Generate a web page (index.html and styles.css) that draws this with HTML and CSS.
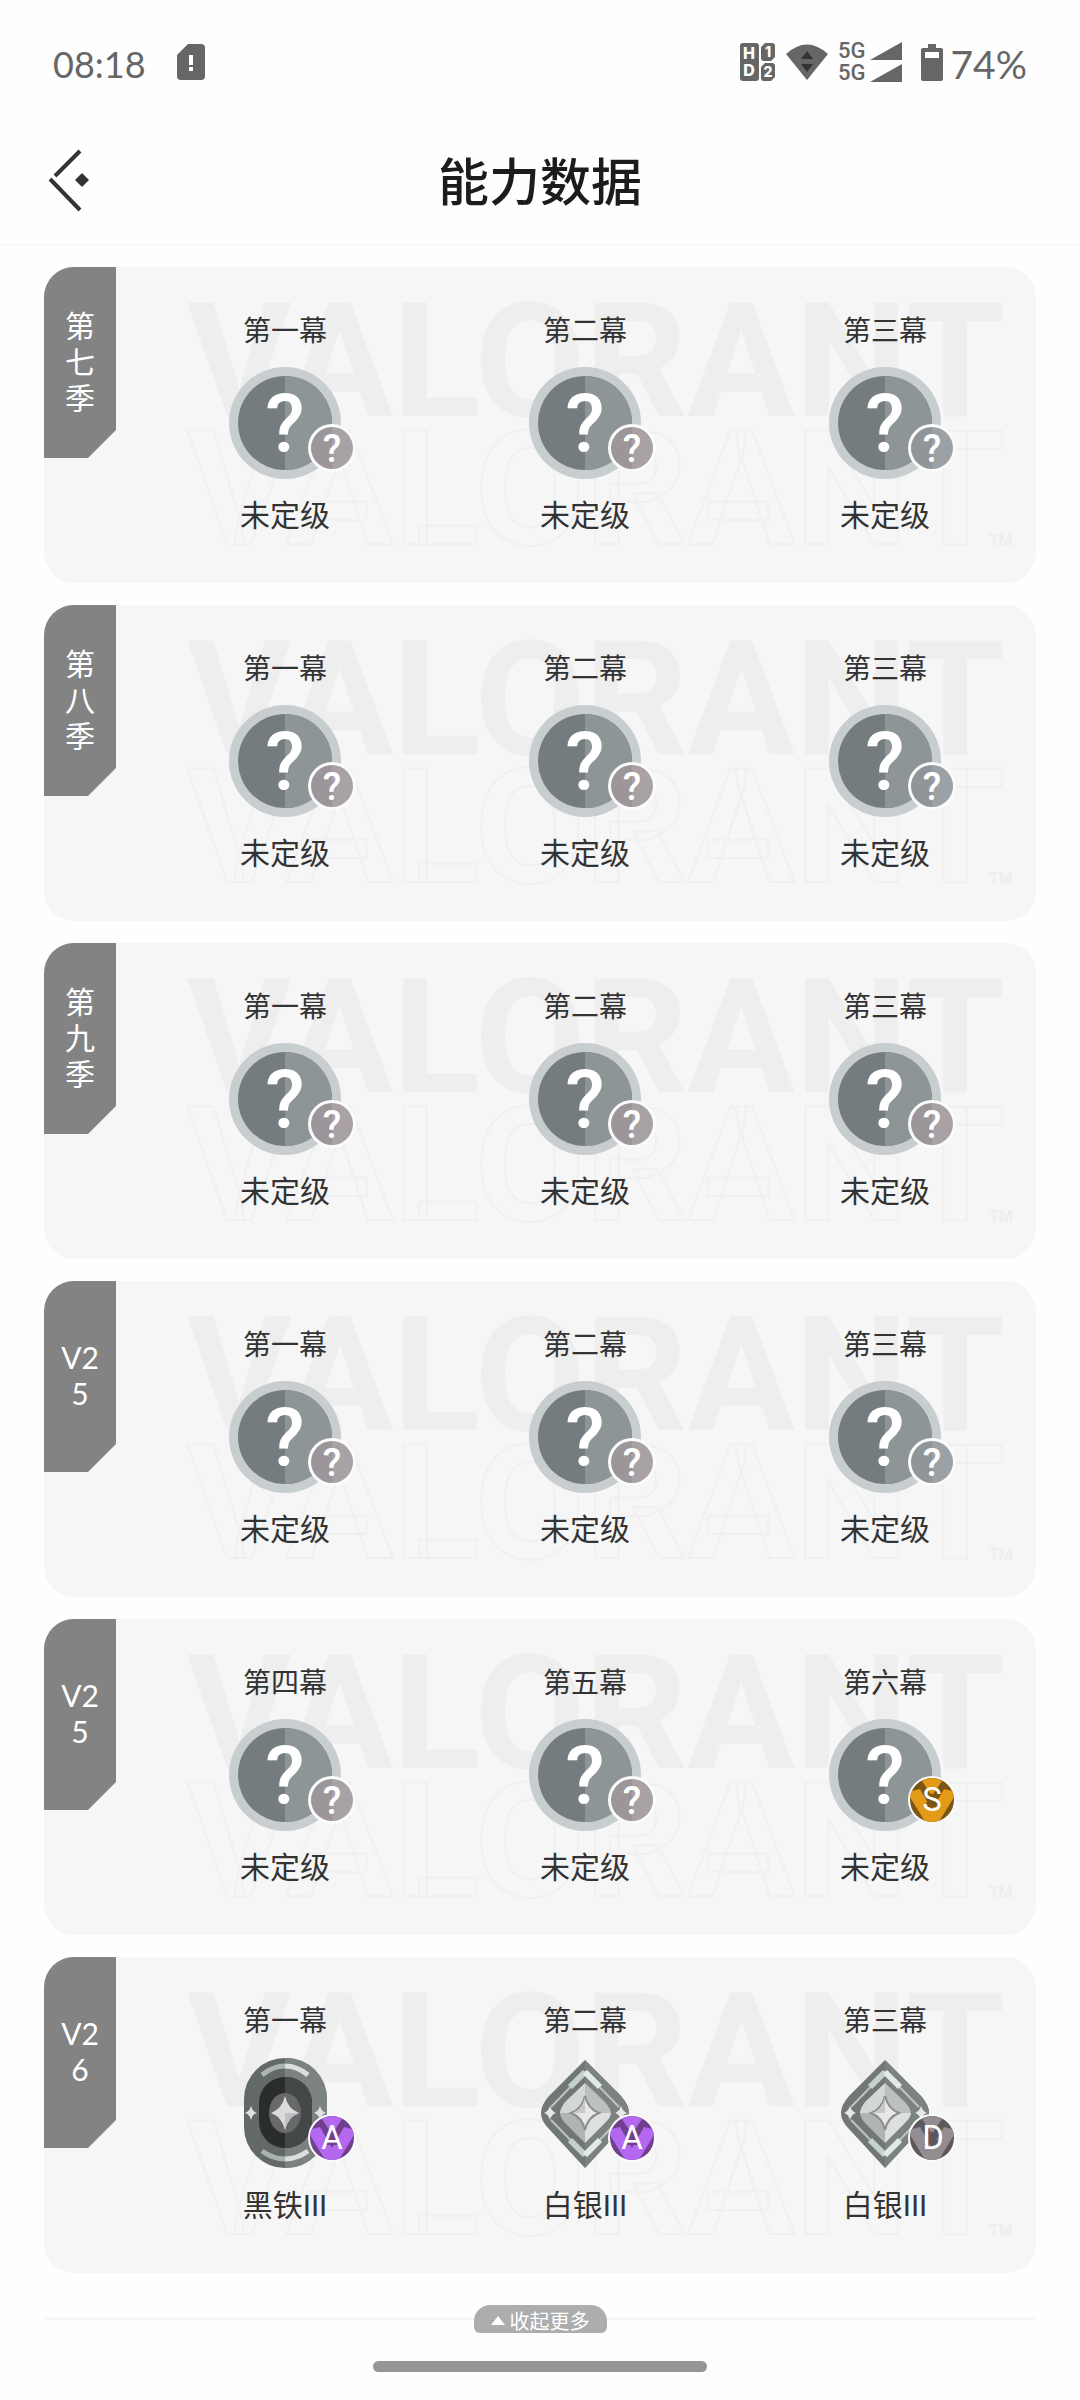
FILE: index.html
```html
<!DOCTYPE html>
<html lang="zh-CN">
<head>
  <meta charset="UTF-8">
  <meta name="viewport" content="width=device-width, initial-scale=1.0">
  <title>能力数据</title>
  <link rel="stylesheet" href="styles.css">
</head>

<body>

  <!-- 图标定义 -->
  <svg class="defs" width="0" height="0" aria-hidden="true">
    <defs>
      <path id="star" d="M0 -17 Q3 -4 14 0 Q3 4 0 17 Q-3 4 -14 0 Q-3 -4 0 -17Z"/>
      <symbol id="rank-none" viewBox="0 0 112 112">
        <circle cx="56" cy="56" r="56" fill="#c8cdd0"/>
        <circle cx="56" cy="56" r="47" fill="#757c7f"/>
        <path d="M56 9 A47 47 0 0 1 56 103Z" fill="#8e9597"/>
        <text class="mark" x="56" y="85" font-size="81">?</text>
      </symbol>
      <symbol id="rank-iron" viewBox="0 0 112 112">
        <rect x="15" y="1" width="83" height="110" rx="41" fill="#626967"/>
        <path d="M56 1 H57 A41 41 0 0 1 98 42 V70 A41 41 0 0 1 57 111 H56Z" fill="#7b8280"/>
        <rect x="30" y="20" width="53" height="71" rx="26" fill="#2b2d2d"/>
        <path d="M56 20 H57 A26 26 0 0 1 83 46 V65 A26 26 0 0 1 57 91 H56Z" fill="#454848"/>
        <path d="M33 18 Q44 9 56 9" fill="none" stroke="#a9b4b0" stroke-width="5"/>
        <path d="M56 9 Q68 9 79 18" fill="none" stroke="#d9dfdd" stroke-width="5"/>
        <path d="M33 94 Q44 102 56 102" fill="none" stroke="#a9b4b0" stroke-width="5"/>
        <path d="M56 102 Q68 102 79 94" fill="none" stroke="#d9dfdd" stroke-width="5"/>
        <ellipse cx="56" cy="56" rx="16" ry="20" fill="#68696b"/>
        <use href="#star" x="56" y="56" fill="#dcdadd"/>
        <path d="M56 56 H70 Q59 60 56 73Z" fill="#c2bfc4"/>
        <use href="#star" transform="translate(22 56) scale(.42)" fill="#e0e0e2"/>
        <use href="#star" transform="translate(91 56) scale(.42)" fill="#e0e0e2"/>
      </symbol>
      <symbol id="rank-silver" viewBox="0 0 112 112">
        <path d="M56 3 L92 39 Q100 48 100 56 Q100 64 92 72 L56 111 L20 72 Q12 64 12 56 Q12 48 20 39Z" fill="#707774"/>
        <path d="M56 3 L92 39 Q100 48 100 56 Q100 64 92 72 L56 111Z" fill="#7b827f"/>
        <path d="M22 50 L56 15 L90 50 M22 63 L56 98 L90 63" fill="none" stroke="#bcc5c2" stroke-width="2"/>
        <path d="M41 30 L56 15 M41 83 L56 98" fill="none" stroke="#c4d1cc" stroke-width="6"/>
        <path d="M56 15 L71 30 M56 98 L71 83" fill="none" stroke="#e1eae7" stroke-width="6"/>
        <path d="M56 26 L76 45 Q82 52 82 56 H56Z" fill="#bcc1bf"/>
        <path d="M56 26 L36 45 Q31 52 31 56 H56Z" fill="#d3d7d5"/>
        <path d="M31 56 Q31 60 36 66 L56 86 V56Z" fill="#b0b5b3"/>
        <path d="M82 56 Q82 60 76 66 L56 86 V56Z" fill="#dde0df"/>
        <use href="#star" x="56" y="56" fill="#e8e7e8" stroke="#8b8e8d" stroke-width="2"/>
        <path d="M56 40 V56 H43 Q53 53 56 40Z" fill="#c8c8c9"/>
        <use href="#star" transform="translate(21 56) scale(.42)" fill="#e6e8e7"/>
        <use href="#star" transform="translate(92 56) scale(.42)" fill="#e6e8e7"/>
      </symbol>
      <symbol id="badge-none" viewBox="0 0 48 48">
        <circle cx="24" cy="24" r="24" fill="#fbfbfb"/>
        <circle cx="24" cy="24" r="21" fill="currentColor"/>
        <path d="M24 3 A21 21 0 0 1 24 45Z" fill="#fff" fill-opacity=".12"/>
        <text class="mark" x="24" y="38" font-size="38">?</text>
      </symbol>
      <symbol id="badge-gem" viewBox="0 0 48 48">
        <circle cx="24" cy="24" r="24" fill="#fbfbfb"/>
        <circle cx="24" cy="24" r="22" fill="currentColor"/>
        <path d="M14 5 Q24 -1 34 5 L24 20Z M4 15 L12 13 L24 34 L36 13 L44 15 Q46 18 46 21 L32 44 Q24 48 16 44 L2 21 Q2 18 4 15Z" fill="var(--gem)"/>
        <path d="M24 17 L32 31 H16Z" fill="currentColor"/>
      </symbol>
    </defs>
  </svg>

  <div class="status-bar">
    <div class="status-group">
      <span class="time">08:18</span>
      <svg class="sim" width="28" height="36" viewBox="0 0 28 36">
        <path d="M11 0 H24 Q28 0 28 4 V32 Q28 36 24 36 H4 Q0 36 0 32 V11Z" fill="#666"/>
        <path d="M12 11 H16 V21 H12Z M12 23 H16 V27 H12Z" fill="#fff"/>
      </svg>
    </div>
    <div class="status-group">
      <svg width="35" height="38" viewBox="0 0 35 38" font-family="Inter, sans-serif" font-weight="800" font-size="16" fill="#fff" text-anchor="middle">
        <rect width="19" height="38" rx="3" fill="#666"/>
        <path d="M25 0 H32 Q35 0 35 3 V14 L31 18 H24 Q21 18 21 15 V4Z M25 20 H32 Q35 20 35 23 V34 L31 38 H24 Q21 38 21 35 V24Z" fill="#666"/>
        <text x="9" y="16">H</text>
        <text x="9" y="33">D</text>
        <text x="28" y="14" font-size="14">1</text>
        <text x="28" y="34" font-size="14">2</text>
      </svg>
      <svg class="wifi" width="42" height="36" viewBox="0 0 42 36">
        <path d="M0 10 Q21 -9 42 10 L21 36Z" fill="#666"/>
        <path d="M15 15 L21 7 L27 15Z M15 20 H27 L21 28Z" fill="#333"/>
      </svg>
      <div class="signals">
        <span>5G</span>
        <svg width="32" height="18" viewBox="0 0 32 18"><path d="M0 18 L32 0 V18Z" fill="#666"/></svg>
        <span>5G</span>
        <svg width="32" height="18" viewBox="0 0 32 18"><path d="M0 18 L32 0 V18Z" fill="#666"/></svg>
      </div>
      <svg class="battery" width="22" height="37" viewBox="0 0 22 37">
        <path d="M7 0 H15 V4 H20 Q22 4 22 6 V35 Q22 37 20 37 H2 Q0 37 0 35 V6 Q0 4 2 4 H7Z" fill="#666"/>
        <path d="M4 8 H18 V14 H4Z" fill="#fff"/>
      </svg>
      <span class="percent">74%</span>
    </div>
  </div>

  <header class="header">
    <button class="back" type="button" aria-label="返回">
      <svg width="42" height="64" viewBox="0 0 42 64">
        <path d="M32 3 L7 28 M2 31 L32 62" fill="none" stroke="#333" stroke-width="4"/>
        <path d="M34 25 L41 32 L34 39 L27 32Z" fill="#333"/>
      </svg>
    </button>
    <h1>能力数据</h1>
  </header>

  <main class="seasons">

    <section class="season">
      <div class="watermark" aria-hidden="true"><span>VALORANT</span><span class="outline">VALORANT</span><small>TM</small></div>
      <h2 class="tag">第七季</h2>
      <div class="acts">
        <div class="act"><h3>第一幕</h3><div class="rank"><svg><use href="#rank-none"/></svg><svg class="badge"><use href="#badge-none"/></svg></div><p>未定级</p></div>
        <div class="act"><h3>第二幕</h3><div class="rank"><svg><use href="#rank-none"/></svg><svg class="badge"><use href="#badge-none"/></svg></div><p>未定级</p></div>
        <div class="act"><h3>第三幕</h3><div class="rank"><svg><use href="#rank-none"/></svg><svg class="badge cool"><use href="#badge-none"/></svg></div><p>未定级</p></div>
      </div>
    </section>

    <section class="season">
      <div class="watermark" aria-hidden="true"><span>VALORANT</span><span class="outline">VALORANT</span><small>TM</small></div>
      <h2 class="tag">第八季</h2>
      <div class="acts">
        <div class="act"><h3>第一幕</h3><div class="rank"><svg><use href="#rank-none"/></svg><svg class="badge"><use href="#badge-none"/></svg></div><p>未定级</p></div>
        <div class="act"><h3>第二幕</h3><div class="rank"><svg><use href="#rank-none"/></svg><svg class="badge"><use href="#badge-none"/></svg></div><p>未定级</p></div>
        <div class="act"><h3>第三幕</h3><div class="rank"><svg><use href="#rank-none"/></svg><svg class="badge cool"><use href="#badge-none"/></svg></div><p>未定级</p></div>
      </div>
    </section>

    <section class="season">
      <div class="watermark" aria-hidden="true"><span>VALORANT</span><span class="outline">VALORANT</span><small>TM</small></div>
      <h2 class="tag">第九季</h2>
      <div class="acts">
        <div class="act"><h3>第一幕</h3><div class="rank"><svg><use href="#rank-none"/></svg><svg class="badge"><use href="#badge-none"/></svg></div><p>未定级</p></div>
        <div class="act"><h3>第二幕</h3><div class="rank"><svg><use href="#rank-none"/></svg><svg class="badge"><use href="#badge-none"/></svg></div><p>未定级</p></div>
        <div class="act"><h3>第三幕</h3><div class="rank"><svg><use href="#rank-none"/></svg><svg class="badge"><use href="#badge-none"/></svg></div><p>未定级</p></div>
      </div>
    </section>

    <section class="season">
      <div class="watermark" aria-hidden="true"><span>VALORANT</span><span class="outline">VALORANT</span><small>TM</small></div>
      <h2 class="tag">V25</h2>
      <div class="acts">
        <div class="act"><h3>第一幕</h3><div class="rank"><svg><use href="#rank-none"/></svg><svg class="badge"><use href="#badge-none"/></svg></div><p>未定级</p></div>
        <div class="act"><h3>第二幕</h3><div class="rank"><svg><use href="#rank-none"/></svg><svg class="badge"><use href="#badge-none"/></svg></div><p>未定级</p></div>
        <div class="act"><h3>第三幕</h3><div class="rank"><svg><use href="#rank-none"/></svg><svg class="badge cool"><use href="#badge-none"/></svg></div><p>未定级</p></div>
      </div>
    </section>

    <section class="season">
      <div class="watermark" aria-hidden="true"><span>VALORANT</span><span class="outline">VALORANT</span><small>TM</small></div>
      <h2 class="tag">V25</h2>
      <div class="acts">
        <div class="act"><h3>第四幕</h3><div class="rank"><svg><use href="#rank-none"/></svg><svg class="badge"><use href="#badge-none"/></svg></div><p>未定级</p></div>
        <div class="act"><h3>第五幕</h3><div class="rank"><svg><use href="#rank-none"/></svg><svg class="badge"><use href="#badge-none"/></svg></div><p>未定级</p></div>
        <div class="act"><h3>第六幕</h3><div class="rank"><svg><use href="#rank-none"/></svg><svg class="badge gold" viewBox="0 0 48 48"><use href="#badge-gem"/><text class="letter" x="24" y="35">S</text></svg></div><p>未定级</p></div>
      </div>
    </section>

    <section class="season">
      <div class="watermark" aria-hidden="true"><span>VALORANT</span><span class="outline">VALORANT</span><small>TM</small></div>
      <h2 class="tag">V26</h2>
      <div class="acts">
        <div class="act"><h3>第一幕</h3><div class="rank"><svg><use href="#rank-iron"/></svg><svg class="badge purple" viewBox="0 0 48 48"><use href="#badge-gem"/><text class="letter" x="24" y="35">A</text></svg></div><p>黑铁III</p></div>
        <div class="act"><h3>第二幕</h3><div class="rank"><svg><use href="#rank-silver"/></svg><svg class="badge purple" viewBox="0 0 48 48"><use href="#badge-gem"/><text class="letter" x="24" y="35">A</text></svg></div><p>白银III</p></div>
        <div class="act"><h3>第三幕</h3><div class="rank"><svg><use href="#rank-silver"/></svg><svg class="badge gray" viewBox="0 0 48 48"><use href="#badge-gem"/><text class="letter" x="25" y="35">D</text></svg></div><p>白银III</p></div>
      </div>
    </section>

  </main>

  <div class="more">
    <button type="button">
      <svg width="14" height="9" viewBox="0 0 14 9"><path d="M0 9 L7 0 L14 9Z" fill="#fff"/></svg>
      收起更多
    </button>
  </div>

  <div class="home-bar"></div>

</body>
</html>
```
FILE: styles.css
```css
* {
  box-sizing: border-box;
  margin: 0;
  padding: 0;
}

body {
  background: #fefefe;
  color: #333;
  font-family: "Noto Sans CJK SC", sans-serif;
}

button {
  border: none;
  background: none;
  font: inherit;
  cursor: pointer;
}

svg {
  display: block;
}

.defs {
  position: absolute;
}

/* 状态栏 */
.status-bar {
  display: flex;
  justify-content: space-between;
  align-items: center;
  height: 124px;
  padding: 0 53px;
  color: #666;
}

.status-group {
  display: flex;
  align-items: center;
}

.time,
.percent {
  padding-top: 3px;
  font-family: Lato, sans-serif;
  font-size: 39px;
  line-height: 48px;
}

.time {
  font-size: 36px;
}

.sim {
  margin-left: 31px;
}

.wifi {
  margin-left: 11px;
}

.signals {
  display: grid;
  grid-template-columns: auto auto;
  gap: 4px;
  align-items: center;
  margin-left: 10px;
  font-family: Roboto, sans-serif;
  font-size: 22px;
  font-weight: 500;
  line-height: 18px;
}

.battery {
  margin: 0 8px 0 19px;
}

/* 标题 */
.header {
  display: grid;
  grid-template-columns: 1fr auto 1fr;
  align-items: center;
  height: 122px;
  padding: 0 48px 8px;
  border-bottom: 2px solid #f9f9f9;
}

.header h1 {
  padding-bottom: 2px;
  color: #1c1c1c;
  font-size: 51px;
  font-weight: 500;
  line-height: 72px;
}

.back {
  justify-self: start;
}

/* 赛季列表 */
.seasons {
  display: flex;
  flex-direction: column;
  gap: 22px;
  padding: 21px 44px 0;
}

.season {
  position: relative;
  display: flex;
  align-items: flex-start;
  min-height: 316px;
  border-radius: 30px;
  background: #f6f6f6;
}

.tag {
  position: relative;
  display: flex;
  align-items: center;
  width: 72px;
  height: 191px;
  padding: 0 15px 4px;
  border-top-left-radius: 30px;
  background: #838383;
  clip-path: polygon(0 0, 100% 0, 100% 163px, 44px 100%, 0 100%);
  color: #fff;
  font-family: Lato, "Noto Sans CJK SC", sans-serif;
  font-size: 30px;
  font-weight: 400;
  line-height: 36px;
  text-align: center;
  word-break: break-all;
}

.acts {
  position: relative;
  flex: 1;
  display: grid;
  grid-template-columns: repeat(3, 1fr);
  padding: 42px 1px 42px 19px;
}

.act {
  display: flex;
  flex-direction: column;
  align-items: center;
}

.act h3 {
  font-size: 28px;
  font-weight: 400;
  line-height: 40px;
}

.act p {
  margin-top: 16px;
  font-family: Roboto, "Noto Sans CJK SC", sans-serif;
  font-size: 30px;
  line-height: 42px;
}

.rank {
  position: relative;
  margin-top: 18px;
}

.rank svg {
  width: 112px;
  height: 112px;
}

.rank .badge {
  position: absolute;
  top: 57px;
  left: 79px;
  width: 48px;
  height: 48px;
  color: #9c9599;
}

.rank .cool {
  color: #8f9599;
}

.rank .gold {
  --gem: #e39a16;
  color: #7a5414;
}

.rank .purple {
  --gem: #b468f0;
  color: #70408f;
}

.rank .gray {
  --gem: #938c90;
  color: #5e585c;
}

.mark,
.letter {
  fill: #fff;
  font-family: Roboto, sans-serif;
  font-weight: 500;
  text-anchor: middle;
}

.letter {
  font-size: 33px;
  font-weight: 400;
}

/* 背景水印 */
.watermark {
  position: absolute;
  top: 31px;
  left: 143px;
  color: #eeeeee;
  font-family: Roboto, sans-serif;
  font-size: 160px;
  font-weight: 700;
  line-height: 128px;
  white-space: nowrap;
}

.watermark span {
  display: block;
}

.watermark .outline {
  color: #f6f6f6;
  -webkit-text-stroke: 2px #f0f0f0;
}

.watermark small {
  position: absolute;
  right: -8px;
  bottom: 4px;
  font-size: 16px;
  line-height: 18px;
}

/* 收起更多 */
.more {
  display: flex;
  align-items: center;
  padding: 32px 44px 0;
}

.more::before,
.more::after {
  content: "";
  flex: 1;
  height: 2px;
  background: #f6f6f6;
}

.more button {
  display: flex;
  align-items: center;
  gap: 5px;
  height: 28px;
  padding: 3px 17px 0;
  border-radius: 16px 16px 6px 6px;
  background: #adadad;
  color: #fff;
  font-size: 20px;
  line-height: 24px;
}

.home-bar {
  width: 31%;
  height: 11px;
  margin: 28px auto;
  border-radius: 6px;
  background: #959595;
}
```
